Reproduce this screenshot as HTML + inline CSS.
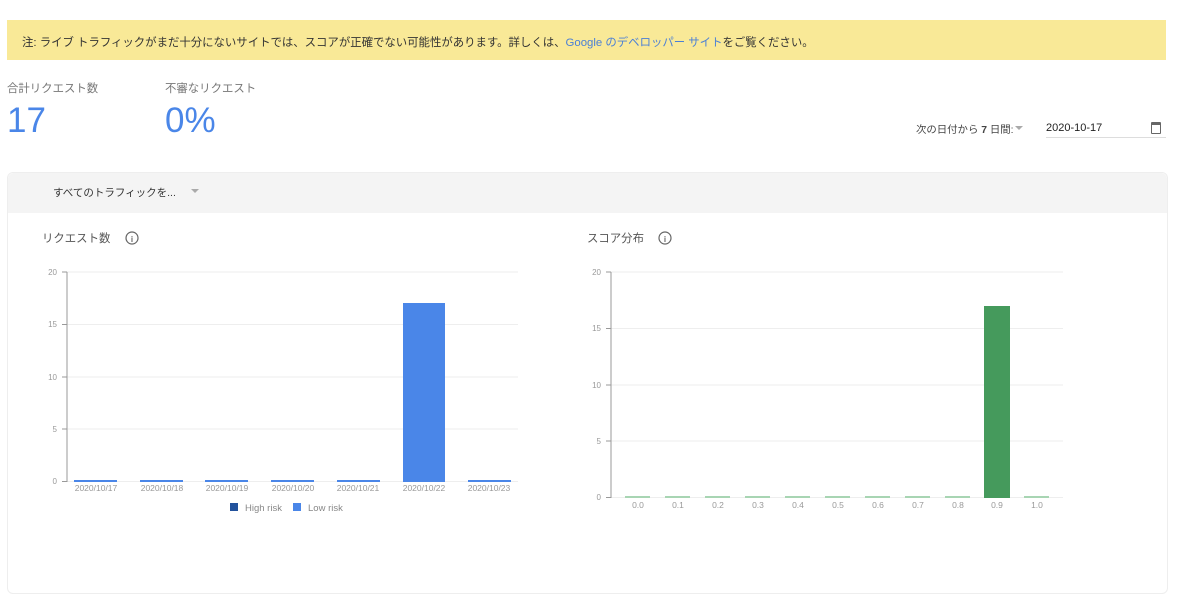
<!DOCTYPE html>
<html><head><meta charset="utf-8"><style>
body{margin:0;width:1200px;height:557px;background:#fff;font-family:"Liberation Sans","Noto Sans CJK JP",sans-serif;position:relative;overflow:hidden}
.a{position:absolute;white-space:nowrap}
</style></head><body>
<div class="a" style="left:7px;top:20px;width:1159px;height:40px;background:#f9e997"></div>
<div class="a" style="left:22px;top:34px;font-size:11.4px;color:#333">注: ライブ トラフィックがまだ十分にないサイトでは、スコアが正確でない可能性があります。詳しくは、<span style="color:#4a7fd6">Google のデベロッパー サイト</span>をご覧ください。</div>
<div class="a" style="left:7px;top:80px;font-size:11.4px;color:#777">合計リクエスト数</div>
<div class="a" style="left:165px;top:80px;font-size:11.4px;color:#777">不審なリクエスト</div>
<div class="a" style="left:7px;top:101px;font-size:35px;color:#4a86e8">17</div>
<div class="a" style="left:165px;top:101px;font-size:35px;color:#4a86e8">0%</div>
<div class="a" style="left:916px;top:121px;font-size:10.4px;color:#444">次の日付から <b>7</b> 日間:</div>
<div class="a" style="left:1015px;top:126px;width:0;height:0;border-left:4px solid transparent;border-right:4px solid transparent;border-top:4px solid #aaa"></div>
<div class="a" style="left:1046px;top:122px;font-size:11px;color:#222">2020-10-17</div>
<div class="a" style="left:1046px;top:137px;width:120px;height:1px;background:#ddd"></div>
<div class="a" style="left:1151px;top:122px;width:8px;height:8px;border:1.5px solid #666;border-top-width:3px;border-radius:1px"></div>
<div class="a" style="left:7px;top:172px;width:1159px;height:420px;border:1px solid #eee;border-radius:6px;background:#fff"></div>
<div class="a" style="left:8px;top:173px;width:1159px;height:40px;background:#f4f4f4;border-radius:6px 6px 0 0"></div>
<div class="a" style="left:53px;top:185px;font-size:10.5px;color:#333">すべてのトラフィックを...</div>
<div class="a" style="left:191px;top:189px;width:0;height:0;border-left:4px solid transparent;border-right:4px solid transparent;border-top:4px solid #aaa"></div>
<div class="a" style="left:42px;top:230px;font-size:11.4px;color:#555">リクエスト数</div>
<div class="a" style="left:587px;top:230px;font-size:11.4px;color:#555">スコア分布</div>
<svg class="a" style="left:0;top:0" width="1200" height="557">
<g fill="none" stroke="#666" stroke-width="1.2"><circle cx="132" cy="238" r="6"/><circle cx="665" cy="238" r="6"/></g>
<g fill="#666" font-family="Liberation Sans" font-size="8" font-weight="bold" text-anchor="middle"><text x="132" y="242">i</text><text x="665" y="242">i</text></g>
<g stroke="#eee"><line x1="67" y1="272" x2="518" y2="272"/><line x1="67" y1="324.5" x2="518" y2="324.5"/><line x1="67" y1="377" x2="518" y2="377"/><line x1="67" y1="429" x2="518" y2="429"/><line x1="67" y1="481.5" x2="518" y2="481.5"/>
<line x1="611" y1="272" x2="1063" y2="272"/><line x1="611" y1="328.5" x2="1063" y2="328.5"/><line x1="611" y1="385" x2="1063" y2="385"/><line x1="611" y1="441" x2="1063" y2="441"/><line x1="611" y1="497.5" x2="1063" y2="497.5"/></g>
<g stroke="#999"><line x1="67" y1="272" x2="67" y2="482"/><line x1="611" y1="272" x2="611" y2="498"/>
<line x1="62" y1="272" x2="67" y2="272"/><line x1="62" y1="324.5" x2="67" y2="324.5"/><line x1="62" y1="377" x2="67" y2="377"/><line x1="62" y1="429" x2="67" y2="429"/><line x1="62" y1="481.5" x2="67" y2="481.5"/>
<line x1="606" y1="272" x2="611" y2="272"/><line x1="606" y1="328.5" x2="611" y2="328.5"/><line x1="606" y1="385" x2="611" y2="385"/><line x1="606" y1="441" x2="611" y2="441"/><line x1="606" y1="497.5" x2="611" y2="497.5"/></g>
<g fill="#999" font-family="Liberation Sans" font-size="8" text-anchor="end">
<text x="57" y="275">20</text><text x="57" y="327">15</text><text x="57" y="380">10</text><text x="57" y="432">5</text><text x="57" y="484">0</text>
<text x="601" y="275">20</text><text x="601" y="331">15</text><text x="601" y="388">10</text><text x="601" y="444">5</text><text x="601" y="500">0</text></g>
<g fill="#4a86e8"><rect x="74" y="480" width="43" height="2"/><rect x="140" y="480" width="43" height="2"/><rect x="205" y="480" width="43" height="2"/><rect x="271" y="480" width="43" height="2"/><rect x="337" y="480" width="43" height="2"/><rect x="403" y="303" width="42" height="179"/><rect x="468" y="480" width="43" height="2"/></g>
<g fill="#999" font-family="Liberation Sans" font-size="8.5" text-anchor="middle">
<text x="96" y="491">2020/10/17</text><text x="162" y="491">2020/10/18</text><text x="227" y="491">2020/10/19</text><text x="293" y="491">2020/10/20</text><text x="358" y="491">2020/10/21</text><text x="424" y="491">2020/10/22</text><text x="489" y="491">2020/10/23</text>
<text x="638" y="508">0.0</text><text x="678" y="508">0.1</text><text x="718" y="508">0.2</text><text x="758" y="508">0.3</text><text x="798" y="508">0.4</text><text x="838" y="508">0.5</text><text x="878" y="508">0.6</text><text x="918" y="508">0.7</text><text x="958" y="508">0.8</text><text x="997" y="508">0.9</text><text x="1037" y="508">1.0</text></g>
<g fill="#a8d5b3"><rect x="625" y="496" width="25" height="2"/><rect x="665" y="496" width="25" height="2"/><rect x="705" y="496" width="25" height="2"/><rect x="745" y="496" width="25" height="2"/><rect x="785" y="496" width="25" height="2"/><rect x="825" y="496" width="25" height="2"/><rect x="865" y="496" width="25" height="2"/><rect x="905" y="496" width="25" height="2"/><rect x="945" y="496" width="25" height="2"/><rect x="1024" y="496" width="25" height="2"/></g>
<rect x="984" y="306" width="26" height="192" fill="#459a5c"/>
<rect x="230" y="503" width="8" height="8" fill="#22529c"/><rect x="293" y="503" width="8" height="8" fill="#4a86e8"/>
<g fill="#888" font-family="Liberation Sans" font-size="9.5"><text x="245" y="511">High risk</text><text x="308" y="511">Low risk</text></g>
</svg>
</body></html>
